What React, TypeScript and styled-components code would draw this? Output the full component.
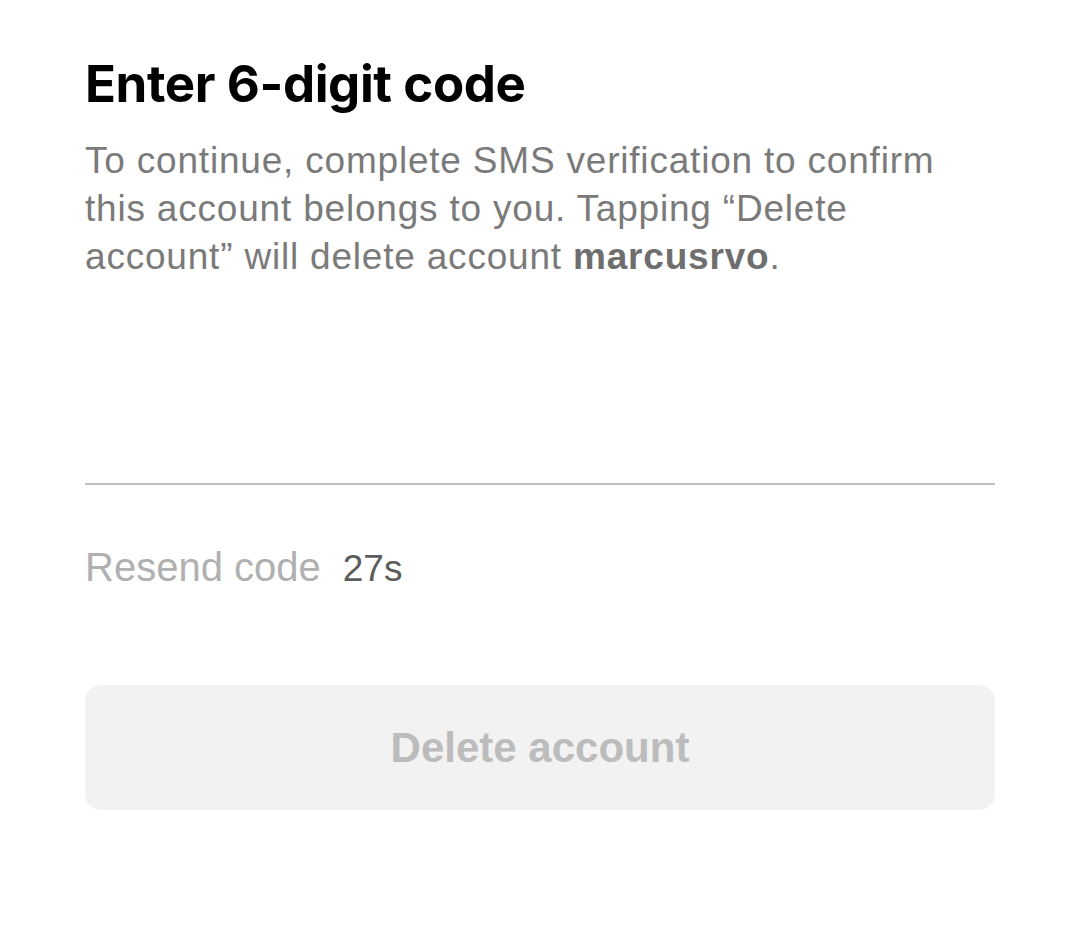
import React from "react";
import styled, { createGlobalStyle } from "styled-components";

const Global = createGlobalStyle`
  html, body { margin: 0; padding: 0; background: #ffffff; }
  body { font-family: "Liberation Sans", Arial, sans-serif; }
`;

const Page = styled.div`
  width: 1080px;
  height: 943px;
  box-sizing: border-box;
  padding: 52px 85px 0 85px;
  display: flex;
  flex-direction: column;
`;

const Title = styled.h1`
  margin: 0;
  font-family: Inter, "Noto Sans", sans-serif;
  font-weight: 700;
  font-size: 51px;
  line-height: 64px;
  letter-spacing: -0.4px;
  color: #000;
`;

const Description = styled.p`
  margin: 21px 0 0 0;
  font-family: "Liberation Sans", Arial, sans-serif;
  font-size: 37px;
  line-height: 48px;
  letter-spacing: 0.8px;
  color: #7a7a7a;
  b { font-weight: 700; color: #6e6e6e; }
`;

const CodeInput = styled.div`
  margin-top: 202px;
  height: 0;
  border-bottom: 2px solid #bdbdbd;
`;

const ResendRow = styled.div`
  margin-top: 60px;
  display: flex;
  align-items: baseline;
  gap: 22px;
  font-family: "Liberation Sans", Arial, sans-serif;
  line-height: 44px;
`;

const ResendLabel = styled.span`
  font-size: 40px;
  color: #b0b0b0;
`;

const Countdown = styled.span`
  font-size: 37px;
  color: #5c5c5c;
`;

const PrimaryButton = styled.button`
  margin-top: 94px;
  height: 125px;
  width: 100%;
  border: none;
  border-radius: 16px;
  background: #f2f2f2;
  color: #bcbcbc;
  font-family: "Liberation Sans", Arial, sans-serif;
  font-size: 42px;
  font-weight: 700;
  cursor: default;
`;

export default function App() {
  return (
    <>
      <Global />
      <Page>
        <Title>Enter 6-digit code</Title>
        <Description>
          To continue, complete SMS verification to confirm this account belongs to you. Tapping “Delete
          account” will delete account <b>marcusrvo</b>.
        </Description>
        <CodeInput />
        <ResendRow>
          <ResendLabel>Resend code</ResendLabel>
          <Countdown>27s</Countdown>
        </ResendRow>
        <PrimaryButton disabled>Delete account</PrimaryButton>
      </Page>
    </>
  );
}
